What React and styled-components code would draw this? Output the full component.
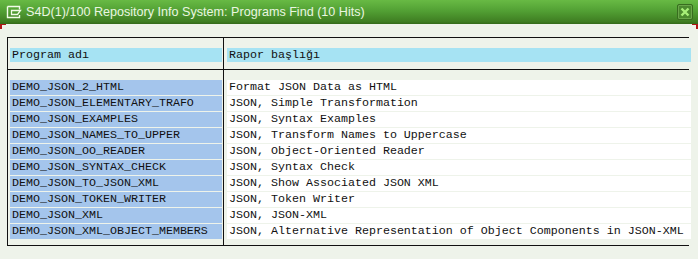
import React from "react";
import styled, { createGlobalStyle } from "styled-components";

const GlobalStyle = createGlobalStyle`
  html, body {
    margin: 0;
    padding: 0;
    background: #eef3ea;
  }
`;

const rows = [
  ["DEMO_JSON_2_HTML", "Format JSON Data as HTML"],
  ["DEMO_JSON_ELEMENTARY_TRAFO", "JSON, Simple Transformation"],
  ["DEMO_JSON_EXAMPLES", "JSON, Syntax Examples"],
  ["DEMO_JSON_NAMES_TO_UPPER", "JSON, Transform Names to Uppercase"],
  ["DEMO_JSON_OO_READER", "JSON, Object-Oriented Reader"],
  ["DEMO_JSON_SYNTAX_CHECK", "JSON, Syntax Check"],
  ["DEMO_JSON_TO_JSON_XML", "JSON, Show Associated JSON XML"],
  ["DEMO_JSON_TOKEN_WRITER", "JSON, Token Writer"],
  ["DEMO_JSON_XML", "JSON, JSON-XML"],
  [
    "DEMO_JSON_XML_OBJECT_MEMBERS",
    "JSON, Alternative Representation of Object Components in JSON-XML",
  ],
];

export const SCWindow = styled("div")`
  position: relative;
  width: 698px;
  height: 259px;
  background: #eef3ea;
  overflow: hidden;
`;

export const SCTitleBar = styled("div")`
  height: 24px;
  box-sizing: border-box;
  display: flex;
  align-items: center;
  padding: 0 5px 0 6px;
  background: linear-gradient(#68ba44 0%, #52a034 45%, #3f7e22 90%, #336a19 100%);
`;

export const SCTitle = styled("span")`
  flex: 1;
  margin-left: 4px;
  font-family: "Liberation Sans", Arial, sans-serif;
  font-size: 12.6px;
  color: #eaf6e0;
  white-space: nowrap;
`;

export const SCCloseButton = styled("div")`
  width: 16px;
  height: 16px;
  box-sizing: border-box;
  border: 1px solid #386d1f;
  box-shadow: inset 0 0 0 1px #6aa64a;
  background: #4b8a2e;
  border-radius: 2px;
  display: flex;
  align-items: center;
  justify-content: center;
`;

export const SCCorner = styled("div")`
  position: absolute;
  top: 24px;
  ${props => (props.right ? "right: 0;" : "left: 0;")}
  width: 6px;
  height: 5px;
  border-top: 1px solid #b01818;
  ${props =>
    props.right ? "border-right: 2px solid #b01818;" : "border-left: 2px solid #b01818;"}
  box-sizing: border-box;
`;

export const SCContent = styled("div")`
  padding: 13px 0 0 7px;
`;

export const SCBox = styled("div")`
  width: 682px;
  box-sizing: border-box;
  border-top: 1px solid #111;
  border-bottom: 1px solid #111;
  border-left: 1px solid #111;
`;

export const SCSection = styled("div")`
  display: grid;
  grid-template-columns: 216px 465px;
  border-bottom: ${props => (props.last ? "none" : "1px solid #111")};
`;

export const SCColumn = styled("div")`
  display: flex;
  flex-direction: column;
  gap: 1px;
  box-sizing: border-box;
  padding: ${props => props.pad};
  border-right: ${props => (props.divider ? "1px solid #111" : "none")};
`;

export const SCCell = styled("div")`
  width: ${props => props.w}px;
  height: ${props => props.h}px;
  flex-shrink: 0;
  box-sizing: border-box;
  padding-left: 2px;
  background: ${props => props.bg};
  font-family: "Liberation Mono", "Courier New", monospace;
  font-size: 11.67px;
  line-height: ${props => props.h}px;
  color: #111;
  white-space: nowrap;
`;

const WindowIcon = () => (
  <svg width="16" height="14" viewBox="0 0 16 14">
    <path
      d="M1.5 1.5 H13.5 V4.5 M1.5 1.5 V12.5 H13.5 V10"
      fill="none"
      stroke="#f2fbe8"
      strokeWidth="1.4"
    />
    <path d="M5.5 5.5 H14.5 L11.5 9.5 H5.5 Z" fill="none" stroke="#f2fbe8" strokeWidth="1.3" />
  </svg>
);

const CloseIcon = () => (
  <svg width="10" height="10" viewBox="0 0 10 10">
    <path d="M1.5 1.5 L8.5 8.5 M8.5 1.5 L1.5 8.5" stroke="#a8ef78" strokeWidth="2.4" />
  </svg>
);

const App = () => {
  return (
    <SCWindow>
      <GlobalStyle />
      <SCTitleBar>
        <WindowIcon />
        <SCTitle>S4D(1)/100 Repository Info System: Programs Find (10 Hits)</SCTitle>
        <SCCloseButton>
          <CloseIcon />
        </SCCloseButton>
      </SCTitleBar>
      <SCCorner />
      <SCCorner right />
      <SCContent>
        <SCBox>
          <SCSection>
            <SCColumn divider pad="10px 1px 7px 2px">
              <SCCell w={212} h={14} bg="#a6e3f3">
                Program adı
              </SCCell>
            </SCColumn>
            <SCColumn pad="10px 0 7px 3px">
              <SCCell w={464} h={14} bg="#a6e3f3">
                Rapor başlığı
              </SCCell>
            </SCColumn>
          </SCSection>
          <SCSection last>
            <SCColumn divider pad="10px 1px 6px 2px">
              {rows.map(r => (
                <SCCell key={r[0]} w={212} h={15} bg="#a4c5ec">
                  {r[0]}
                </SCCell>
              ))}
            </SCColumn>
            <SCColumn pad="10px 0 6px 3px">
              {rows.map(r => (
                <SCCell key={r[0]} w={464} h={15} bg="#ffffff">
                  {r[1]}
                </SCCell>
              ))}
            </SCColumn>
          </SCSection>
        </SCBox>
      </SCContent>
    </SCWindow>
  );
};

export default App;
